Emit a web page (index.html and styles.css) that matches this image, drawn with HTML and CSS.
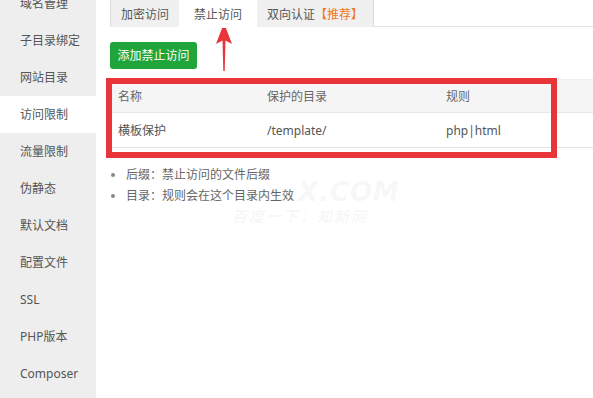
FILE: index.html
```html
<!DOCTYPE html>
<html lang="zh-CN">
<head>
<meta charset="utf-8">
<title>访问限制</title>
<link rel="stylesheet" href="styles.css">
</head>
<body>
<div class="app">
  <nav class="sidebar">
    <div class="nav-item">域名管理</div>
    <div class="nav-item">子目录绑定</div>
    <div class="nav-item">网站目录</div>
    <div class="nav-item active">访问限制</div>
    <div class="nav-item">流量限制</div>
    <div class="nav-item">伪静态</div>
    <div class="nav-item">默认文档</div>
    <div class="nav-item">配置文件</div>
    <div class="nav-item">SSL</div>
    <div class="nav-item">PHP版本</div>
    <div class="nav-item">Composer</div>
  </nav>
  <main class="main">
    <div class="tabs">
      <div class="tab">加密访问</div>
      <div class="tab active">禁止访问</div>
      <div class="tab">双向认证<span class="rec">【推荐】</span></div>
    </div>
    <div class="toolbar">
      <button class="btn-green">添加禁止访问</button>
    </div>
    <table class="grid">
      <thead>
        <tr><th class="c1">名称</th><th class="c2">保护的目录</th><th>规则</th></tr>
      </thead>
      <tbody>
        <tr><td>横板保护</td><td>/template/</td><td>php|html</td></tr>
      </tbody>
    </table>
    <ul class="tips">
      <li>后缀：禁止访问的文件后缀</li>
      <li>目录：规则会在这个目录内生效</li>
    </ul>
  </main>
  <div class="watermark">
    <div class="wm-big">X.COM</div>
    <div class="wm-small">百度一下：知新网</div>
  </div>
  <div class="highlight"></div>
  <svg class="arrow" width="24" height="54" viewBox="0 0 24 54">
    <polygon points="12,3 4,24 10.5,20.5 11.3,51 12.7,51 13.5,20.5 20,24" fill="#e8353a"/>
  </svg>
</div>
</body>
</html>
```
FILE: styles.css
```css
* { box-sizing: border-box; }
html, body { margin: 0; padding: 0; background: #fff; }
body {
  font-family: "Noto Sans", "Noto Sans CJK SC", sans-serif;
  font-size: 12px;
  color: #555;
}
.app {
  position: relative;
  display: flex;
  width: 593px;
  height: 398px;
  overflow: hidden;
}
.sidebar {
  width: 96px;
  flex: none;
  background: #eeeeee;
  margin-top: -15px;
  padding-bottom: 40px;
}
.nav-item {
  height: 37px;
  line-height: 37px;
  padding-left: 20px;
  color: #555;
  white-space: nowrap;
}
.nav-item.active { background: #fff; }
.main {
  flex: 1;
  padding-left: 14px;
}
.tabs {
  display: flex;
  margin-top: -8px;
  border-bottom: 1px solid #e2e2e2;
  height: 35px;
}
.tab {
  height: 35px;
  padding: 14px 10px 0;
  line-height: 16px;
  background: #f0f0f0;
  border: 1px solid #dcdcdc;
  border-bottom: none;
  color: #555;
  white-space: nowrap;
}
.tab + .tab { margin-left: -1px; }
.tab.active {
  background: #fff;
  border-color: transparent;
  padding: 14px 14px 0;
  height: 36px;
  position: relative;
  z-index: 1;
}
.rec { color: #f0761e; }
.toolbar { padding-top: 15px; }
.btn-green {
  display: block;
  height: 27px;
  width: 87px;
  padding: 0;
  border: none;
  border-radius: 3px;
  background: #20a53a;
  color: #fff;
  font-family: inherit;
  font-size: 12px;
  line-height: 27px;
}
.grid {
  margin-top: 10px;
  width: 483px;
  border-collapse: collapse;
}
.grid th, .grid td {
  text-align: left;
  padding: 0 8px;
  font-weight: normal;
  white-space: nowrap;
}
.grid th {
  height: 33px;
  background: #f5f5f5;
  border-top: 1px solid #ececec;
  border-bottom: 1px solid #e8e8e8;
  color: #666;
}
.grid td {
  height: 35px;
  border-bottom: 1px solid #e4e4e4;
  color: #555;
}
.grid .c1 { width: 149px; }
.grid .c2 { width: 179px; }
.tips {
  list-style: none;
  margin: 16px 0 0;
  padding: 0;
}
.tips li {
  position: relative;
  line-height: 21px;
  padding-left: 16px;
  color: #666;
}
.tips li::before {
  content: "";
  position: absolute;
  left: 1px;
  top: 9px;
  width: 4px;
  height: 4px;
  border-radius: 50%;
  background: #888;
}
.highlight {
  position: absolute;
  left: 106px;
  top: 78px;
  width: 451px;
  height: 80px;
  border: 6px solid #e8353a;
}
.arrow {
  position: absolute;
  left: 212px;
  top: 20px;
}
.watermark {
  position: absolute;
  left: 232px;
  top: 178px;
  font-style: italic;
  font-weight: bold;
  color: rgba(0, 0, 0, 0.05);
  pointer-events: none;
}
.wm-big {
  font-family: "DejaVu Sans", sans-serif;
  font-size: 26px;
  line-height: 28px;
  letter-spacing: 1px;
  margin-left: 66px;
}
.wm-small {
  font-size: 15px;
  line-height: 20px;
  letter-spacing: 2px;
}
```
